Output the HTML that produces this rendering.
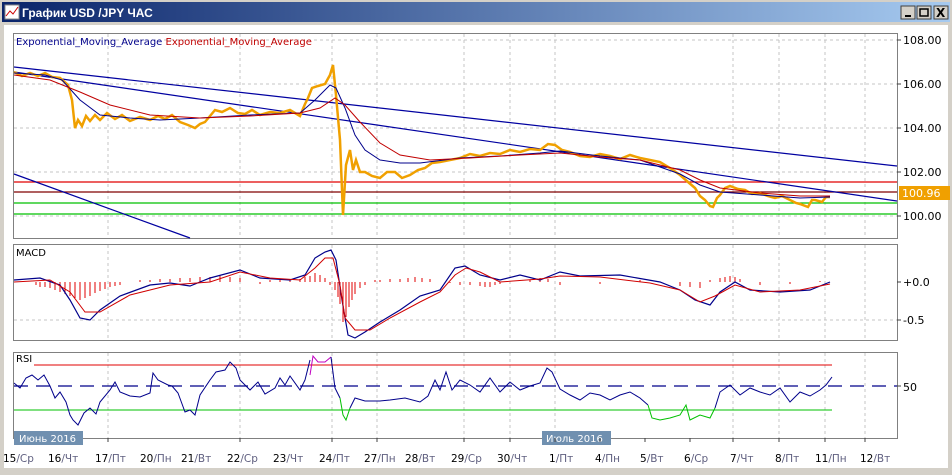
<!DOCTYPE html><html><head><meta charset="utf-8"><style>
body{margin:0;width:952px;height:470px;overflow:hidden;background:#d4d0c8;font-family:"Liberation Sans","DejaVu Sans",sans-serif}
</style></head><body>
<svg width="952" height="470" xmlns="http://www.w3.org/2000/svg" font-family="DejaVu Sans, sans-serif">
<defs><linearGradient id="tb" x1="0" x2="1"><stop offset="0" stop-color="#0a246a"/><stop offset="1" stop-color="#a6caf0"/></linearGradient></defs>
<rect x="0" y="0" width="952" height="470" fill="#d4d0c8"/>
<rect x="2" y="2" width="948" height="20" fill="url(#tb)"/>
<rect x="5" y="5" width="14" height="14" fill="#fff" stroke="#888"/>
<polyline points="6,16 10,11 13,14 18,7" fill="none" stroke="#c00" stroke-width="1"/>
<text x="22" y="17" font-family="Liberation Sans,sans-serif" font-weight="bold" font-size="12" fill="#fff">График USD /JPY  ЧАС</text>
<g fill="#d4d0c8" stroke="#404040"><rect x="901" y="6" width="14" height="13"/><rect x="917" y="6" width="14" height="13"/><rect x="934" y="6" width="14" height="13"/></g>
<rect x="905" y="15" width="6" height="2" fill="#000"/><rect x="920" y="9" width="8" height="7" fill="none" stroke="#000" stroke-width="1.5"/>
<text x="936" y="17" font-size="12" font-weight="bold">X</text>
<rect x="4" y="25" width="944" height="443" fill="#fff"/>
<g fill="none" stroke="#808080"><rect x="13.5" y="33.5" width="884" height="205"/><rect x="13.5" y="244.5" width="884" height="96"/><rect x="13.5" y="352.5" width="884" height="86"/></g>
<g stroke="#c4c4c4" stroke-dasharray="3,3">
<path d="M108 34V238M240 34V238M332 34V238M377 34V238M464 34V238M510 34V238M555 34V238M733 34V238M779 34V238M825 34V238M865 34V238"/>
<path d="M108 245V340M240 245V340M332 245V340M377 245V340M464 245V340M510 245V340M555 245V340M733 245V340M779 245V340M825 245V340M865 245V340"/>
<path d="M108 353V438M240 353V438M332 353V438M377 353V438M464 353V438M510 353V438M555 353V438M733 353V438M779 353V438M825 353V438M865 353V438"/>
<path d="M14 40H897M14 84H897M14 128H897M14 172H897M14 216H897M14 320H897"/>
</g>
<g font-size="11" fill="#000"><text x="903" y="44">108.00</text><text x="903" y="88">106.00</text><text x="903" y="132">104.00</text><text x="903" y="176">102.00</text><text x="903" y="220">100.00</text>
<text x="903" y="286">+0.0</text><text x="903" y="324">-0.5</text><text x="903" y="391">50</text></g>
<g stroke="#404040"><path d="M897 40h4M897 84h4M897 128h4M897 172h4M897 216h4M897 282h4M897 320h4M897 386h4"/></g>
<rect x="899" y="186" width="51" height="14" fill="#f0a000"/><text x="902" y="197" font-size="11" fill="#fff">100.96</text>
<text x="16" y="45" font-size="10" fill="#00008b">Exponential_Moving_Average <tspan fill="#c00000">Exponential_Moving_Average</tspan></text>
<g stroke-width="1.2"><path d="M14 182H897" stroke="#e00000"/><path d="M14 192H897" stroke="#800000"/><path d="M14 203H897" stroke="#00c000"/><path d="M14 214H897" stroke="#00c000"/></g>
<g stroke="#0000a0" stroke-width="1.2" fill="none"><path d="M14 67L897 166"/><path d="M14 72L897 201"/><path d="M14 174L190 238"/></g>
<polyline fill="none" stroke="#f0a000" stroke-width="2.5" points="14,72 22,76 30,73 38,76 45,73 52,77 60,78 68,85 72,100 75,128 78,120 82,126 86,116 90,121 95,115 100,120 107,113 115,119 122,115 130,121 140,117 150,120 158,116 165,119 172,115 180,122 188,125 195,128 200,124 205,122 210,116 215,110 222,112 230,108 238,113 245,114 252,110 260,115 270,112 280,113 290,110 300,116 305,104 308,98 312,88 318,86 325,84 330,75 333,65 336,95 340,140 343,215 346,165 350,150 353,170 356,160 360,172 365,172 372,176 380,178 387,172 395,172 402,178 410,175 418,170 425,168 432,163 440,162 450,160 460,158 470,154 480,156 490,153 500,154 510,150 520,152 530,149 540,150 548,144 555,145 562,150 570,152 580,156 590,157 600,154 610,156 620,159 630,155 640,158 650,160 660,162 670,168 680,175 688,182 695,188 700,196 705,200 710,206 713,207 717,198 720,195 725,188 730,186 738,189 745,190 752,194 760,193 768,196 775,198 782,196 790,200 796,203 800,204 808,207 812,200 815,200 822,202 826,197 830,197"/>
<polyline fill="none" stroke="#00008b" stroke-width="1" points="14,73 45,75 62,80 80,100 100,115 130,118 160,120 200,118 250,115 300,113 315,100 330,85 336,88 345,108 355,135 365,150 380,160 400,163 420,163 460,158 500,156 540,153 560,151 600,156 640,160 680,174 700,185 720,192 760,195 800,198 830,197"/>
<polyline fill="none" stroke="#c00000" stroke-width="1" points="14,75 50,80 80,92 110,105 150,115 200,118 250,116 300,113 320,108 335,98 345,105 360,122 380,143 400,155 430,160 470,158 520,155 560,153 600,157 640,160 680,170 700,180 720,188 760,193 800,196 830,196"/>
<g stroke="#e00000" stroke-width="1">
<path d="M36 282v3M40 282v5M45 282v5M50 282v6M55 282v8M60 282v10M65 282v12M70 282v14M75 282v16M80 282v18M85 282v16M90 282v14M95 282v11M100 282v9M105 282v7M110 282v5M115 282v4M120 282v3M140 282v-2M150 282v-2M160 282v-3M170 282v-3M180 282v-4M190 282v-4M200 282v-5M210 282v-5M220 282v-6M230 282v-5M240 282v-4M260 282v2M270 282v-2M280 282v-3M290 282v-3M300 282v-3M305 282v-5M310 282v-6M315 282v-9M320 282v-7M325 282v-4M330 282v3M335 282v8M338 282v15M340 282v22M343 282v40M346 282v35M349 282v25M352 282v18M355 282v12M360 282v6M365 282v3M375 282v-2M380 282v-2M390 282v-3M400 282v-3M408 282v-4M415 282v-5M422 282v-4M430 282v-3M450 282v1M460 282v3M470 282v3M480 282v4M485 282v5M490 282v5M495 282v3M500 282v2M530 282v-2M540 282v-4M548 282v-3M560 282v3M600 282v2M640 282v-2M680 282v4M690 282v5M700 282v6M710 282v-2M720 282v-4M725 282v-5M730 282v-6M735 282v-5M740 282v-3M760 282v3M790 282v2M820 282v-1"/>
</g>
<polyline fill="none" stroke="#00008b" stroke-width="1.2" points="14,280 40,278 60,285 70,300 80,318 90,320 100,310 120,296 150,285 170,283 190,286 210,278 240,270 260,278 290,280 305,275 315,258 325,252 331,250 336,260 342,300 348,335 355,338 365,332 380,322 400,310 420,296 440,290 455,268 465,266 480,275 500,280 520,275 540,280 560,272 580,276 620,275 660,282 680,290 695,300 710,305 720,292 735,282 750,290 780,292 810,290 830,282"/>
<polyline fill="none" stroke="#d00000" stroke-width="1" points="14,282 50,280 70,292 85,312 100,312 130,295 170,285 210,282 240,272 270,278 300,280 315,268 325,258 333,258 340,285 345,318 355,330 370,330 390,318 420,302 440,292 455,275 466,268 480,272 500,282 540,279 560,276 600,277 650,283 680,290 700,302 715,296 735,285 760,292 800,290 830,284"/>
<text x="16" y="256" font-size="10">MACD</text>
<path d="M34 365H832" stroke="#e00000"/><path d="M14 410H832" stroke="#00c000"/>
<path d="M14 386H897" stroke="#00008b" stroke-width="1.2" stroke-dasharray="14,8"/>
<text x="16" y="362" font-size="10">RSI</text>
<polyline fill="none" stroke="#00008b" stroke-width="1" points="14,383 20,388 26,378 32,375 38,380 44,375 50,386 55,398 60,392 66,402 70,415 73,420 78,425 84,413 90,408 96,414 100,402 110,390 115,382 120,392 130,396 140,397 150,393 153,373 158,380 168,385 172,386 178,393 185,412 190,410 195,415 200,395 210,380 216,372 225,370 230,362 236,368 240,380 250,390 258,382 265,394 275,388 280,378 285,385 290,376 300,390 305,380 310,360"/>
<polyline fill="none" stroke="#c000c0" stroke-width="1" points="310,375 313,356 318,362 325,362 331,357"/>
<polyline fill="none" stroke="#00008b" stroke-width="1" points="331,357 335,388 340,398"/>
<polyline fill="none" stroke="#00c000" stroke-width="1" points="340,398 343,415 346,420 350,408"/>
<polyline fill="none" stroke="#00008b" stroke-width="1" points="350,408 355,398 365,401 380,401 390,400 405,398 420,402 428,396 435,380 440,390 446,372 452,390 460,380 470,385 480,392 490,378 500,392 510,382 520,390 530,386 540,383 547,368 552,372 560,389 570,395 580,400 590,393 600,395 610,400 620,395 630,392 640,398 648,405"/>
<polyline fill="none" stroke="#00c000" stroke-width="1" points="648,405 652,418 660,420 670,418 680,415 686,405 690,420 700,415 710,418 715,408"/>
<polyline fill="none" stroke="#00008b" stroke-width="1" points="715,408 720,392 730,385 740,395 750,388 760,392 770,395 780,388 790,402 800,392 810,396 820,390 826,385 832,377"/>
<rect x="14" y="431" width="69" height="14" fill="#7090b0"/><text x="19" y="442" font-size="10" fill="#fff">Июнь 2016</text>
<rect x="542" y="431" width="69" height="14" fill="#7090b0"/><text x="546" y="442" font-size="10" fill="#fff">Июль 2016</text>
<g font-size="10.5" fill="#000">
<text x="3" y="462">15<tspan fill="#606080">/Ср</tspan></text><text x="48" y="462">16<tspan fill="#606080">/Чт</tspan></text><text x="95" y="462">17<tspan fill="#606080">/Пт</tspan></text><text x="140" y="462">20<tspan fill="#606080">/Пн</tspan></text><text x="181" y="462">21<tspan fill="#606080">/Вт</tspan></text><text x="227" y="462">22<tspan fill="#606080">/Ср</tspan></text><text x="273" y="462">23<tspan fill="#606080">/Чт</tspan></text><text x="319" y="462">24<tspan fill="#606080">/Пт</tspan></text><text x="364" y="462">27<tspan fill="#606080">/Пн</tspan></text><text x="405" y="462">28<tspan fill="#606080">/Вт</tspan></text><text x="451" y="462">29<tspan fill="#606080">/Ср</tspan></text><text x="497" y="462">30<tspan fill="#606080">/Чт</tspan></text><text x="549" y="462">1<tspan fill="#606080">/Пт</tspan></text><text x="595" y="462">4<tspan fill="#606080">/Пн</tspan></text><text x="640" y="462">5<tspan fill="#606080">/Вт</tspan></text><text x="684" y="462">6<tspan fill="#606080">/Ср</tspan></text><text x="730" y="462">7<tspan fill="#606080">/Чт</tspan></text><text x="775" y="462">8<tspan fill="#606080">/Пт</tspan></text><text x="815" y="462">11<tspan fill="#606080">/Пн</tspan></text><text x="860" y="462">12<tspan fill="#606080">/Вт</tspan></text>
</g>
<g stroke="#404040"><path d="M108 438v4M240 438v4M332 438v4M377 438v4M464 438v4M510 438v4M555 438v4M600 438v4M645 438v4M690 438v4M733 438v4M779 438v4M825 438v4M865 438v4"/></g>
</svg>
</body></html>
